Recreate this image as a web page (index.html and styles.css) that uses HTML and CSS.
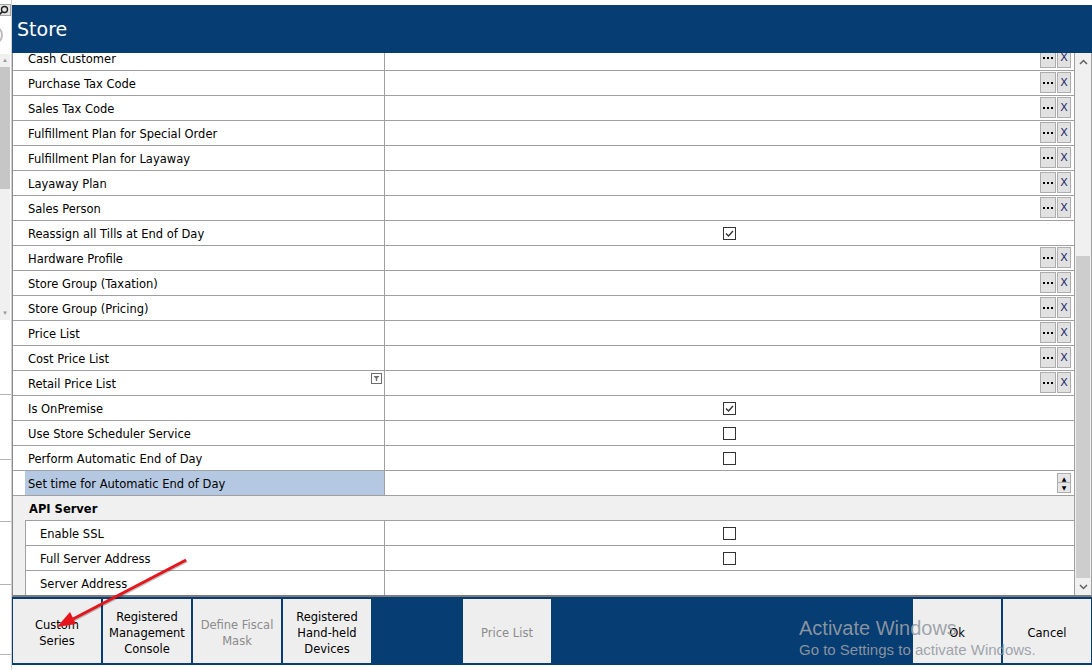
FILE: index.html
```html
<!DOCTYPE html>
<html lang="en">
<head>
  <meta charset="UTF-8">
  <title>Store</title>
  <link rel="stylesheet" href="styles.css">
</head>
<body>
  <div class="screen">
    <!-- sliver of the window behind the dialog -->
    <aside class="bg-app">
      <div class="bg-search">
        <svg width="11" height="10" viewBox="0 0 11 10"><circle cx="6.5" cy="4.5" r="3" fill="none" stroke="#222" stroke-width="1.4"/><path d="M4.3 6.7 L1.5 9.5" stroke="#222" stroke-width="1.6"/></svg>
      </div>
      <div class="bg-blank">
        <svg width="11" height="22" viewBox="0 0 11 22"><path d="M1 2 A9 9 0 0 1 1 20" fill="none" stroke="#bbb" stroke-width="2"/></svg>
      </div>
      <div class="bg-scroll">
        <span class="bg-arrow">&#9652;</span>
        <div class="bg-thumb"></div>
        <span class="bg-arrow down">&#9662;</span>
      </div>
      <div class="bg-line" style="height:75px"></div>
      <div class="bg-line" style="height:65px"></div>
      <div class="bg-line" style="height:62px"></div>
      <div class="bg-line" style="height:63px"></div>
      <div class="bg-line" style="height:70px"></div>
    </aside>

    <div class="dialog">
      <header class="title-bar">
        <h1>Store</h1>
      </header>

      <div class="grid-wrap">
        <div class="grid">
          <div class="rows">
            <div class="row"><div class="gutter"></div><div class="name">Cash Customer</div><div class="value lookup"><span class="dots"><i></i><i></i><i></i></span><span class="clear">X</span></div></div>
            <div class="row"><div class="gutter"></div><div class="name">Purchase Tax Code</div><div class="value lookup"><span class="dots"><i></i><i></i><i></i></span><span class="clear">X</span></div></div>
            <div class="row"><div class="gutter"></div><div class="name">Sales Tax Code</div><div class="value lookup"><span class="dots"><i></i><i></i><i></i></span><span class="clear">X</span></div></div>
            <div class="row"><div class="gutter"></div><div class="name">Fulfillment Plan for Special Order</div><div class="value lookup"><span class="dots"><i></i><i></i><i></i></span><span class="clear">X</span></div></div>
            <div class="row"><div class="gutter"></div><div class="name">Fulfillment Plan for Layaway</div><div class="value lookup"><span class="dots"><i></i><i></i><i></i></span><span class="clear">X</span></div></div>
            <div class="row"><div class="gutter"></div><div class="name">Layaway Plan</div><div class="value lookup"><span class="dots"><i></i><i></i><i></i></span><span class="clear">X</span></div></div>
            <div class="row"><div class="gutter"></div><div class="name">Sales Person</div><div class="value lookup"><span class="dots"><i></i><i></i><i></i></span><span class="clear">X</span></div></div>
            <div class="row"><div class="gutter"></div><div class="name">Reassign all Tills at End of Day</div><div class="value check"><span class="checkbox checked"></span></div></div>
            <div class="row"><div class="gutter"></div><div class="name">Hardware Profile</div><div class="value lookup"><span class="dots"><i></i><i></i><i></i></span><span class="clear">X</span></div></div>
            <div class="row"><div class="gutter"></div><div class="name">Store Group (Taxation)</div><div class="value lookup"><span class="dots"><i></i><i></i><i></i></span><span class="clear">X</span></div></div>
            <div class="row"><div class="gutter"></div><div class="name">Store Group (Pricing)</div><div class="value lookup"><span class="dots"><i></i><i></i><i></i></span><span class="clear">X</span></div></div>
            <div class="row"><div class="gutter"></div><div class="name">Price List</div><div class="value lookup"><span class="dots"><i></i><i></i><i></i></span><span class="clear">X</span></div></div>
            <div class="row"><div class="gutter"></div><div class="name">Cost Price List</div><div class="value lookup"><span class="dots"><i></i><i></i><i></i></span><span class="clear">X</span></div></div>
            <div class="row">
              <div class="gutter"></div>
              <div class="name">Retail Price List
                <svg class="filter" width="11" height="11" viewBox="0 0 11 11"><rect x="0.5" y="0.5" width="10" height="10" fill="#fff" stroke="#6d6d6d"/><path d="M2.5 3 H8.5 L6.2 5.6 V8 H4.8 V5.6 Z" fill="#6d6d6d"/></svg>
              </div>
              <div class="value lookup"><span class="dots"><i></i><i></i><i></i></span><span class="clear">X</span></div>
            </div>
            <div class="row"><div class="gutter"></div><div class="name">Is OnPremise</div><div class="value check"><span class="checkbox checked"></span></div></div>
            <div class="row"><div class="gutter"></div><div class="name">Use Store Scheduler Service</div><div class="value check"><span class="checkbox"></span></div></div>
            <div class="row"><div class="gutter"></div><div class="name">Perform Automatic End of Day</div><div class="value check"><span class="checkbox"></span></div></div>
            <div class="row">
              <div class="gutter"></div>
              <div class="name selected">Set time for Automatic End of Day</div>
              <div class="value lookup">
                <span class="spin"><span class="spin-btn">&#9650;</span><span class="spin-btn">&#9660;</span></span>
              </div>
            </div>

            <!-- API Server group -->
            <div class="row category"><div class="gutter"></div><div class="label">API Server</div></div>
            <div class="row sub"><div class="gutter"></div><div class="name">Enable SSL</div><div class="value check"><span class="checkbox"></span></div></div>
            <div class="row sub"><div class="gutter"></div><div class="name">Full Server Address</div><div class="value check"><span class="checkbox"></span></div></div>
            <div class="row sub"><div class="gutter"></div><div class="name">Server Address</div><div class="value"></div></div>
          </div>
        </div>

        <div class="vscroll">
          <div class="sb-arrow">
            <svg width="9" height="6" viewBox="0 0 9 6"><path d="M1 5 L4.5 1.5 L8 5" fill="none" stroke="#606060" stroke-width="1.5"/></svg>
          </div>
          <div class="sb-track"><div class="sb-thumb"></div></div>
          <div class="sb-arrow">
            <svg width="9" height="6" viewBox="0 0 9 6"><path d="M1 1 L4.5 4.5 L8 1" fill="none" stroke="#606060" stroke-width="1.5"/></svg>
          </div>
        </div>
      </div>

      <footer class="button-bar">
        <button class="btn">Custom<br>Series</button>
        <button class="btn">Registered<br>Management<br>Console</button>
        <button class="btn disabled">Define Fiscal<br>Mask</button>
        <button class="btn">Registered<br>Hand-held<br>Devices</button>
        <button class="btn disabled push">Price List</button>
        <button class="btn ok">Ok</button>
        <button class="btn">Cancel</button>
      </footer>
    </div>

    <!-- Windows activation watermark on top of everything -->
    <div class="watermark">
      <div class="wm-title">Activate Windows</div>
      <div class="wm-sub">Go to Settings to activate Windows.</div>
    </div>

    <!-- red annotation arrow -->
    <svg class="annotation" width="1092" height="670" viewBox="0 0 1092 670">
      <line x1="187" y1="561" x2="74" y2="620" stroke="rgba(0,0,0,0.25)" stroke-width="3"/>
      <line x1="186" y1="560" x2="73" y2="619" stroke="#e6141b" stroke-width="3"/>
      <polygon points="57,627 76,624 70,612" fill="#e6141b"/>
    </svg>
  </div>
</body>
</html>
```

FILE: styles.css
```css
/* base */
* {
  box-sizing: border-box;
}

body {
  margin: 0;
  font-family: "DejaVu Sans", Verdana, sans-serif;
  font-size: 11.5px;
  color: #000;
  background: #fff;
}

.screen {
  position: relative;
  display: flex;
  width: 1092px;
  height: 670px;
  overflow: hidden;
}

/* window behind the dialog */
.bg-app {
  width: 12px;
  flex: none;
  display: flex;
  flex-direction: column;
  border-right: 1px solid #d0d0d0;
}

.bg-search {
  margin-top: 4px;
  height: 12px;
  background: #e4e4e4;
  border: 1px solid #a8a8a8;
  border-left: none;
  overflow: hidden;
}

.bg-search svg {
  display: block;
  margin-left: -2px;
}

.bg-blank {
  height: 38px;
  padding-top: 8px;
  overflow: hidden;
}

.bg-blank svg {
  display: block;
  margin-left: -8px;
}

.bg-scroll {
  width: 10px;
  height: 266px;
  background: #f0f0f0;
  display: flex;
  flex-direction: column;
  align-items: center;
  font-size: 7px;
  color: #9a9a9a;
}

.bg-arrow {
  height: 13px;
  line-height: 13px;
}

.bg-arrow.down {
  margin-top: auto;
}

.bg-thumb {
  width: 10px;
  height: 122px;
  background: #c6c6c6;
}

.bg-line {
  border-bottom: 1px solid #b4b4b4;
}

/* dialog */
.dialog {
  flex: 1;
  display: flex;
  flex-direction: column;
  margin-top: 5px;
  height: 660px;
}

.title-bar {
  height: 48px;
  flex: none;
  background: #063d73;
  display: flex;
  align-items: center;
  padding-left: 5px;
}

.title-bar h1 {
  margin: 0;
  font-size: 19px;
  font-weight: normal;
  color: #fff;
}

/* property grid */
.grid-wrap {
  height: 544px;
  flex: none;
  display: flex;
  border-left: 1px solid #8c8c8c;
  border-bottom: 2px solid #7d7d7d;
}

.grid {
  flex: 1;
  overflow: hidden;
  background: #fff;
}

.rows {
  margin-top: -7px;
}

.row {
  display: flex;
  height: 25px;
}

.gutter {
  width: 12px;
  flex: none;
  border-bottom: 1px solid #a0a0a0;
}

.name {
  width: 360px;
  flex: none;
  display: flex;
  align-items: center;
  padding: 1px 0 0 3px;
  border-right: 1px solid #a0a0a0;
  border-bottom: 1px solid #a0a0a0;
  white-space: nowrap;
}

.name.selected {
  background: #b5c8e1;
}

.value {
  flex: 1;
  display: flex;
  align-items: center;
  border-bottom: 1px solid #a0a0a0;
}

.value.lookup {
  justify-content: flex-end;
  align-items: flex-start;
  gap: 1px;
  padding: 1px 3px 0 0;
}

.value.check {
  justify-content: center;
}

.dots,
.clear {
  height: 21px;
  display: flex;
  align-items: center;
  justify-content: center;
  background: #e1e1e1;
  border: 1px solid #adadad;
}

.dots {
  width: 16px;
  gap: 2px;
}

.dots i {
  width: 2px;
  height: 2px;
  background: #000;
}

.clear {
  width: 14px;
  font-size: 11px;
  color: #1f2a6b;
}

.checkbox {
  width: 13px;
  height: 13px;
  border: 1px solid #333;
  background: #fff;
}

.checkbox.checked {
  background: #fff url("data:image/svg+xml;utf8,<svg xmlns='http://www.w3.org/2000/svg' width='11' height='11'><path d='M2 5.5 L4.5 8 L9 3' fill='none' stroke='%23333' stroke-width='1.4'/></svg>") no-repeat center;
}

.filter {
  margin-left: auto;
  margin-right: 2px;
  align-self: flex-start;
  margin-top: 1px;
}

.spin {
  width: 14px;
  display: flex;
  flex-direction: column;
  margin-top: 1px;
}

.spin-btn {
  height: 10px;
  display: flex;
  align-items: center;
  justify-content: center;
  font-size: 6px;
  background: #e6e6e6;
  border: 1px solid #adadad;
}

.spin-btn + .spin-btn {
  border-top: none;
}

.category {
  background: #f0f0f0;
}

.category .gutter {
  border-bottom: none;
}

.category .label {
  flex: 1;
  display: flex;
  align-items: center;
  padding: 1px 0 0 4px;
  font-weight: bold;
  border-bottom: 1px solid #a0a0a0;
}

.sub .gutter {
  background: #f0f0f0;
  border-bottom: none;
}

.sub .name {
  border-left: 1px solid #a0a0a0;
  padding-left: 14px;
}

/* vertical scrollbar */
.vscroll {
  width: 18px;
  flex: none;
  display: flex;
  flex-direction: column;
  background: #f0f0f0;
  border-left: 1px solid #a0a0a0;
  border-right: 1px solid #a0a0a0;
}

.sb-arrow {
  height: 17px;
  display: flex;
  align-items: center;
  justify-content: center;
}

.sb-track {
  flex: 1;
  display: flex;
  flex-direction: column;
}

.sb-thumb {
  margin: auto 1px 0;
  height: 322px;
  background: #cdcdcd;
}

/* bottom buttons */
.button-bar {
  height: 68px;
  flex: none;
  display: flex;
  gap: 2px;
  padding: 2px 1px;
  background: #063d73;
}

.btn {
  width: 88px;
  border: none;
  padding: 4px 0 0;
  background: #eeeeee;
  font-family: inherit;
  font-size: 11.5px;
  line-height: 16px;
  color: #000;
  text-align: center;
}

.btn.disabled {
  color: #8c8c8c;
}

.btn.push {
  margin-left: 90px;
}

.btn.ok {
  margin-left: auto;
}

/* overlays */
.watermark {
  position: absolute;
  left: 799px;
  top: 617px;
  font-family: "Liberation Sans", Arial, sans-serif;
  color: rgba(150, 156, 164, 0.92);
  pointer-events: none;
}

.wm-title {
  font-size: 20px;
  line-height: 23px;
}

.wm-sub {
  font-size: 15px;
  line-height: 20px;
}

.annotation {
  position: absolute;
  left: 0;
  top: 0;
  pointer-events: none;
}
```
